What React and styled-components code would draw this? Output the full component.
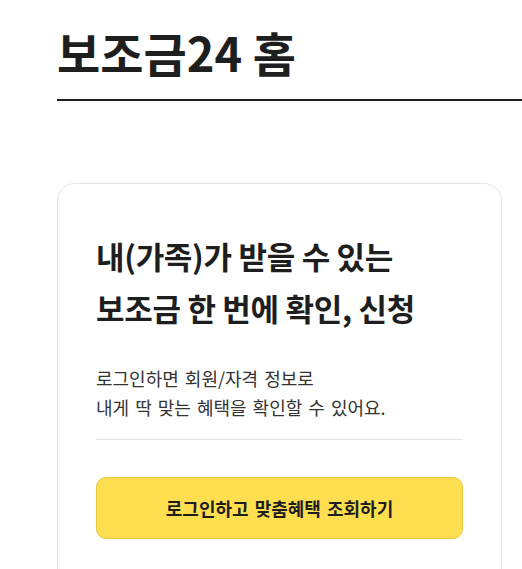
import React from 'react'
import styled, { createGlobalStyle } from 'styled-components'

const GlobalStyle = createGlobalStyle`
    html, body {
        margin: 0;
        padding: 0;
        background: #ffffff;
    }
    body {
        font-family: "Noto Sans CJK KR", "Noto Sans", sans-serif;
        color: #1e1e1e;
        overflow: hidden;
    }
`;

const App = () => {
    return (
        <Page>
            <GlobalStyle />
            <PageTitle>보조금24 홈</PageTitle>
            <Card>
                <Heading>
                    내(가족)가 받을 수 있는<br />
                    보조금 한 번에 확인, 신청
                </Heading>
                <Desc>
                    로그인하면 회원/자격 정보로<br />
                    내게 딱 맞는 혜택을 확인할 수 있어요.
                </Desc>
                <Divider />
                <LoginButton type="button">로그인하고 맞춤혜택 조회하기</LoginButton>
            </Card>
        </Page>
    )
}

export default App

const Page = styled.div`
    padding: 20px 0 0 57px;
    width: 522px;
    box-sizing: border-box;
`;

const PageTitle = styled.h1`
    margin: 0;
    font-size: 47px;
    font-weight: 700;
    letter-spacing: 0;
    line-height: 64px;
    padding-bottom: 15px;
    border-bottom: 2px solid #1e1e1e;
    color: #1e1e1e;
`;

const Card = styled.section`
    margin-top: 82px;
    width: 445px;
    box-sizing: border-box;
    border: 1px solid #e2e4e8;
    border-radius: 18px;
    padding: 46px 38px 60px;
`;

const Heading = styled.h2`
    margin: 0;
    font-size: 31px;
    font-weight: 700;
    letter-spacing: -0.3px;
    line-height: 52px;
    color: #1e1e1e;
`;

const Desc = styled.p`
    margin: 30px 0 0;
    font-size: 18px;
    line-height: 29px;
    color: #333333;
    letter-spacing: 0;
    word-spacing: 2px;
`;

const Divider = styled.hr`
    margin: 17px 0 0;
    border: 0;
    border-top: 1px solid #e2e4e8;
`;

const LoginButton = styled.button`
    display: block;
    margin-top: 37px;
    width: 100%;
    height: 62px;
    border: 1px solid #e6c540;
    border-radius: 10px;
    background: #ffde50;
    font-family: "Noto Sans CJK KR", "Noto Sans", sans-serif;
    font-size: 18px;
    font-weight: 700;
    color: #1e1e1e;
    letter-spacing: 0;
    word-spacing: 2px;
    cursor: pointer;
`;
